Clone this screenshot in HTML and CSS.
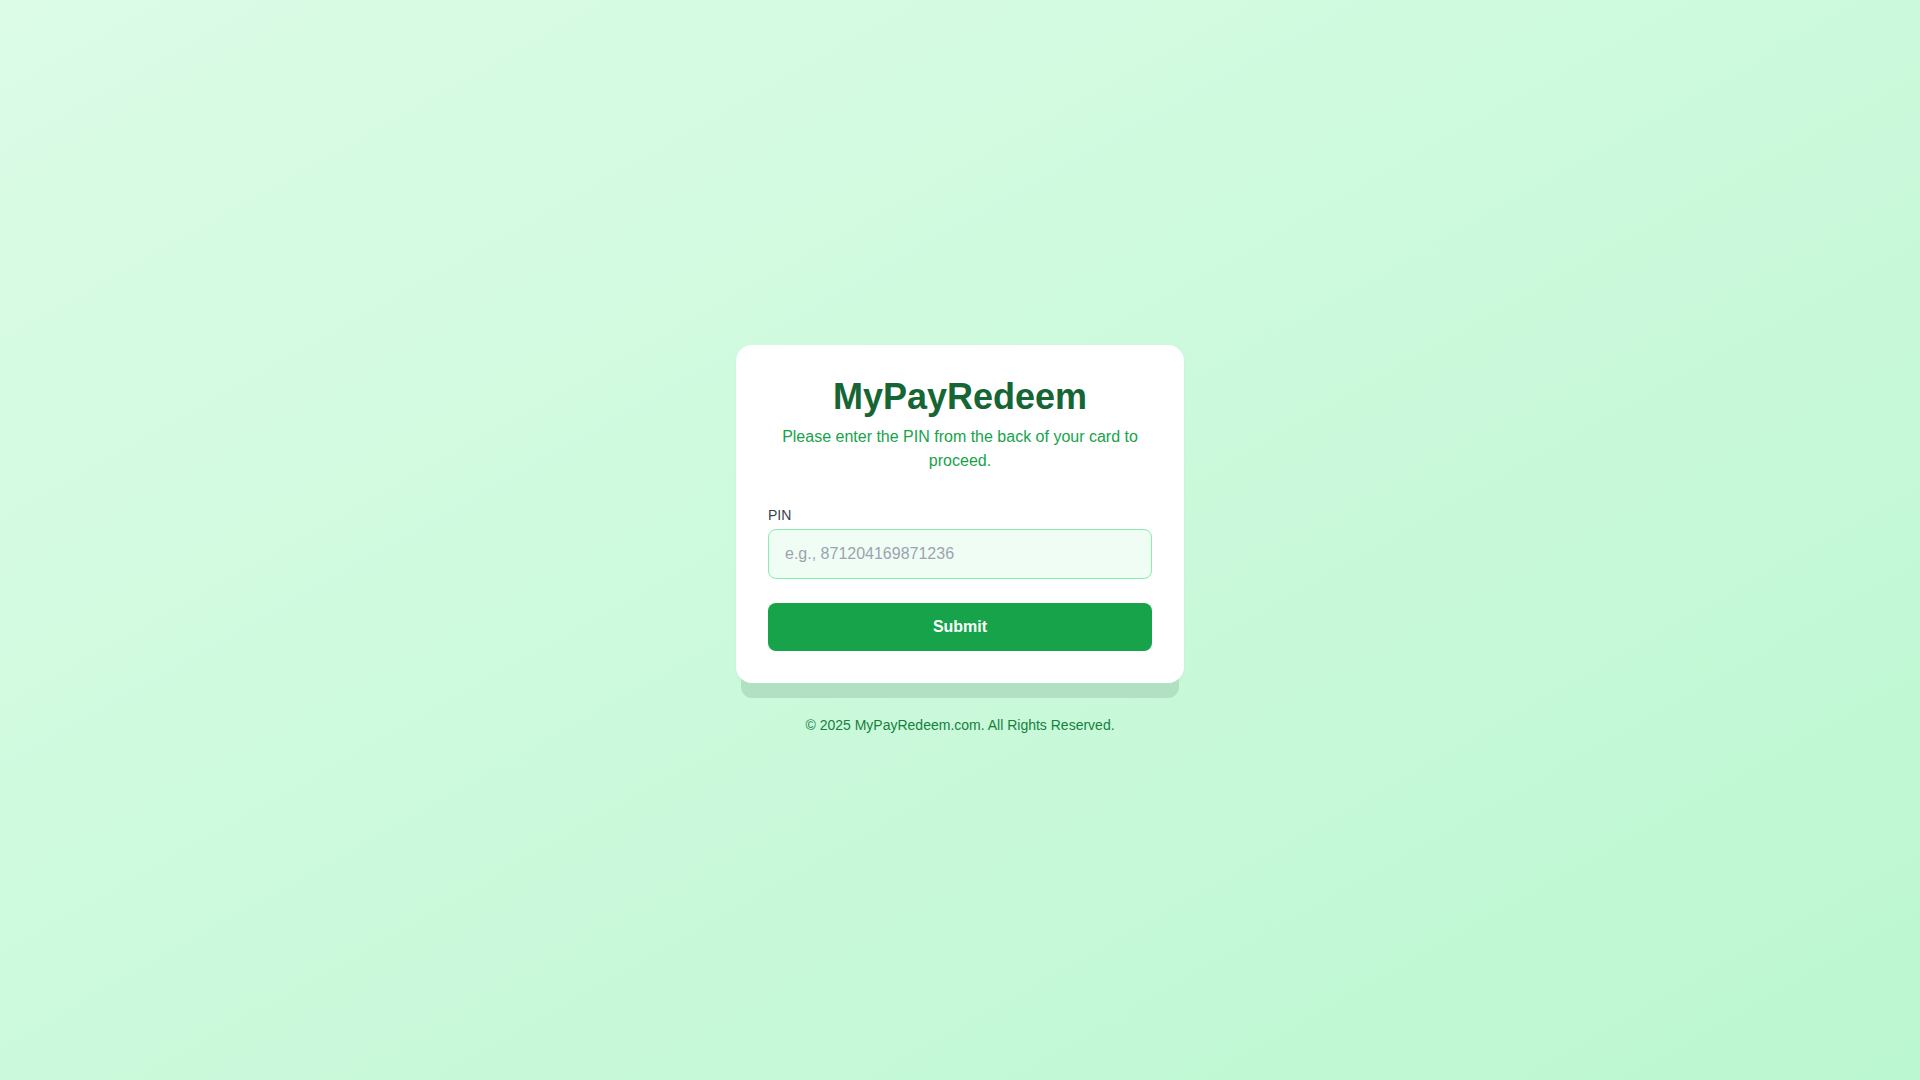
FILE: index.html
```html
<!DOCTYPE html>
<html lang="en">
<head>
<meta charset="utf-8">
<title>MyPayRedeem</title>
<link rel="stylesheet" href="styles.css">
</head>
<body>
<main class="page">
  <div class="card">
    <div class="header">
      <h1 class="title">MyPayRedeem</h1>
      <p class="subtitle">Please enter the PIN from the back of your card to proceed.</p>
    </div>
    <form class="form" onsubmit="return false;">
      <label class="label" for="pin">PIN</label>
      <input class="input" id="pin" type="text" placeholder="e.g., 871204169871236">
      <button class="button" type="submit">Submit</button>
    </form>
  </div>
  <footer class="footer">© 2025 MyPayRedeem.com. All Rights Reserved.</footer>
</main>
</body>
</html>
```

FILE: styles.css
```css
* { box-sizing: border-box; }
html, body { margin: 0; padding: 0; }
body {
  font-family: "Liberation Sans", Arial, sans-serif;
  background: linear-gradient(to bottom right, #dcfce7, #bbf7d0);
  min-height: 100vh;
}
.page {
  min-height: 100vh;
  display: flex;
  flex-direction: column;
  align-items: center;
  justify-content: center;
}
.card {
  width: 448px;
  background: #ffffff;
  border-radius: 16px;
  padding: 32px;
  box-shadow: 0 20px 0 -5px #b2e0c3, 0 2px 4px -1px rgba(0,0,0,0.06);
}
.header {
  text-align: center;
  margin-bottom: 32px;
}
.title {
  margin: 0;
  font-size: 36px;
  line-height: 40px;
  font-weight: 700;
  color: #166534;
}
.subtitle {
  margin: 8px 0 0;
  font-size: 16px;
  line-height: 24px;
  color: #16a34a;
}
.form {
  display: flex;
  flex-direction: column;
}
.label {
  font-size: 14px;
  line-height: 20px;
  color: #374151;
  margin-bottom: 4px;
}
.input {
  height: 50px;
  padding: 0 16px;
  font-family: inherit;
  font-size: 16px;
  color: #111827;
  background: #f0fdf4;
  border: 1px solid #86efac;
  border-radius: 8px;
  outline: none;
  margin-bottom: 24px;
}
.input::placeholder { color: #9ca3af; }
.button {
  height: 48px;
  border: none;
  border-radius: 8px;
  background: #16a34a;
  color: #ffffff;
  font-family: inherit;
  font-size: 16px;
  font-weight: 700;
  cursor: pointer;
}
.footer {
  margin-top: 32px;
  font-size: 14px;
  line-height: 20px;
  color: #15803d;
  text-align: center;
}
```
